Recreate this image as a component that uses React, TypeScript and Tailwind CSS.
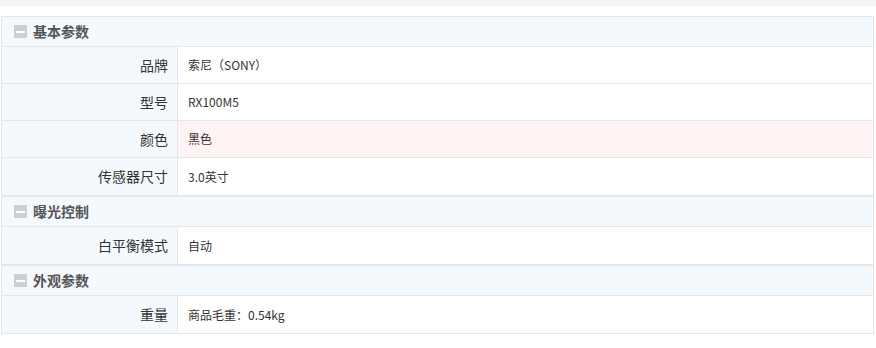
import React from 'react';

type Row = { label: string; value: string; highlight?: boolean };
type Group = { title: string; rows: Row[] };

const groups: Group[] = [
  {
    title: '基本参数',
    rows: [
      { label: '品牌', value: '索尼（SONY）' },
      { label: '型号', value: 'RX100M5' },
      { label: '颜色', value: '黑色', highlight: true },
      { label: '传感器尺寸', value: '3.0英寸' },
    ],
  },
  {
    title: '曝光控制',
    rows: [{ label: '白平衡模式', value: '自动' }],
  },
  {
    title: '外观参数',
    rows: [{ label: '重量', value: '商品毛重：0.54kg' }],
  },
];

const MinusIcon: React.FC = () => (
  <span className="flex h-[13px] w-[13px] items-center justify-center bg-[#cfcfcf]">
    <span className="h-[2px] w-[9px] bg-white" />
  </span>
);

const ParamGroup: React.FC<{ group: Group }> = ({ group }) => (
  <div className="border border-[#e4e6e9]">
    <div className="flex h-[30px] items-center gap-[6px] border-b border-[#e4e6e9] bg-[#f4f9fd] pl-[12px]">
      <MinusIcon />
      <span className="text-[14px] font-bold text-[#555]">{group.title}</span>
    </div>
    {group.rows.map((row, i) => (
      <div
        key={row.label}
        className={`flex h-[37px] ${i < group.rows.length - 1 ? 'border-b border-[#e4e6e9]' : 'h-[36px]'}`}
      >
        <div className="flex w-[176px] items-center justify-end border-r border-[#e4e6e9] bg-[#f4f9fd] pr-[9px] text-[14px] text-[#333]">
          {row.label}
        </div>
        <div
          className={`flex flex-1 items-center pl-[10px] text-[12px] text-[#333] ${row.highlight ? 'bg-[#fff4f3]' : 'bg-white'}`}
        >
          {row.value}
        </div>
      </div>
    ))}
  </div>
);

const App: React.FC = () => {
  return (
    <div
      className="h-[348px] w-[876px] bg-white"
      style={{ fontFamily: '"Noto Sans CJK SC", "Noto Sans", sans-serif' }}
    >
      <div className="h-[6px] bg-[#f5f5f5]" />
      <div className="ml-[1px] mt-[10px] w-[873px]">
        {groups.map((g) => (
          <ParamGroup key={g.title} group={g} />
        ))}
      </div>
    </div>
  );
};

export default App;
